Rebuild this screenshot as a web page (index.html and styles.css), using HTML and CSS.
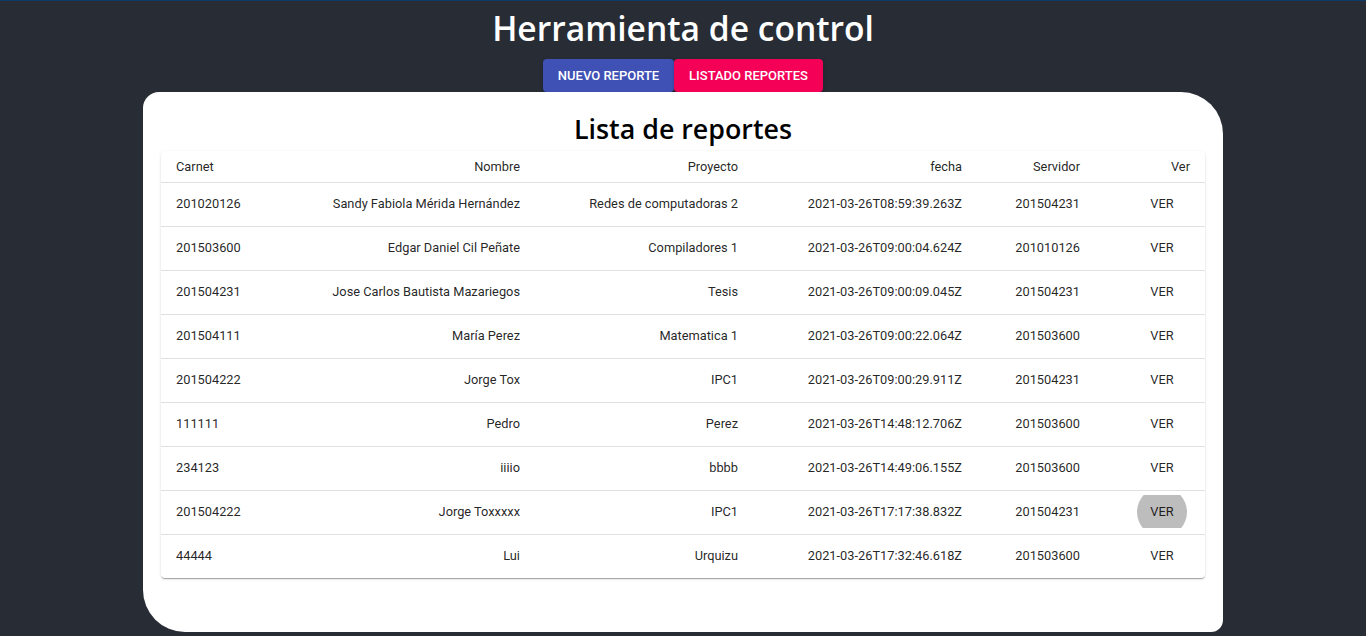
FILE: index.html
```html
<!DOCTYPE html>
<html lang="es">
<head>
<meta charset="utf-8">
<title>Herramienta de control</title>
<link rel="stylesheet" href="styles.css">
</head>
<body>
<div class="app">
  <h1 class="title">Herramienta de control</h1>
  <div class="nav">
    <button class="nav-btn primary">Nuevo reporte</button>
    <button class="nav-btn secondary">Listado reportes</button>
  </div>
  <div class="card">
    <h2 class="subtitle">Lista de reportes</h2>
    <div class="paper">
      <table class="table">
        <colgroup>
          <col class="c-carnet"><col class="c-nombre"><col class="c-proyecto"><col class="c-fecha"><col class="c-servidor"><col class="c-ver">
        </colgroup>
        <thead>
          <tr><th class="left">Carnet</th><th>Nombre</th><th>Proyecto</th><th>fecha</th><th>Servidor</th><th class="last">Ver</th></tr>
        </thead>
        <tbody>
          <tr><td class="left">201020126</td><td>Sandy Fabiola Mérida Hernández</td><td>Redes de computadoras 2</td><td>2021-03-26T08:59:39.263Z</td><td>201504231</td><td class="last"><button class="ver">VER</button></td></tr>
          <tr><td class="left">201503600</td><td>Edgar Daniel Cil Peñate</td><td>Compiladores 1</td><td>2021-03-26T09:00:04.624Z</td><td>201010126</td><td class="last"><button class="ver">VER</button></td></tr>
          <tr><td class="left">201504231</td><td>Jose Carlos Bautista Mazariegos</td><td>Tesis</td><td>2021-03-26T09:00:09.045Z</td><td>201504231</td><td class="last"><button class="ver">VER</button></td></tr>
          <tr><td class="left">201504111</td><td>María Perez</td><td>Matematica 1</td><td>2021-03-26T09:00:22.064Z</td><td>201503600</td><td class="last"><button class="ver">VER</button></td></tr>
          <tr><td class="left">201504222</td><td>Jorge Tox</td><td>IPC1</td><td>2021-03-26T09:00:29.911Z</td><td>201504231</td><td class="last"><button class="ver">VER</button></td></tr>
          <tr><td class="left">111111</td><td>Pedro</td><td>Perez</td><td>2021-03-26T14:48:12.706Z</td><td>201503600</td><td class="last"><button class="ver">VER</button></td></tr>
          <tr><td class="left">234123</td><td>iiiio</td><td>bbbb</td><td>2021-03-26T14:49:06.155Z</td><td>201503600</td><td class="last"><button class="ver">VER</button></td></tr>
          <tr><td class="left">201504222</td><td>Jorge Toxxxxx</td><td>IPC1</td><td>2021-03-26T17:17:38.832Z</td><td>201504231</td><td class="last"><button class="ver active">VER</button></td></tr>
          <tr><td class="left">44444</td><td>Lui</td><td>Urquizu</td><td>2021-03-26T17:32:46.618Z</td><td>201503600</td><td class="last"><button class="ver">VER</button></td></tr>
        </tbody>
      </table>
    </div>
  </div>
</div>
</body>
</html>
```
FILE: styles.css
```css
html, body {
  margin: 0;
  padding: 0;
  height: 100%;
}
body {
  background: #282c34;
  border-top: 1px solid #0e3a6b;
  box-sizing: border-box;
  overflow: hidden;
  font-family: Roboto, "Liberation Sans", sans-serif;
}
.app {
  display: flex;
  flex-direction: column;
  align-items: center;
}
.title {
  margin: 6px 0 0;
  height: 52px;
  font-family: "Open Sans", "Noto Sans", sans-serif;
  font-weight: 600;
  font-size: 33.6px;
  line-height: 42px;
  color: #ffffff;
  letter-spacing: 0;
}
.nav {
  display: flex;
  height: 33px;
}
.nav-btn {
  border: none;
  border-radius: 4px;
  font-family: Roboto, "Liberation Sans", sans-serif;
  font-weight: 500;
  font-size: 13px;
  text-transform: uppercase;
  color: #ffffff;
  padding: 0;
  height: 33px;
  box-shadow: 0 3px 1px -2px rgba(0,0,0,0.2), 0 2px 2px 0 rgba(0,0,0,0.14), 0 1px 5px 0 rgba(0,0,0,0.12);
}
.nav-btn.primary {
  background: #3f51b5;
  width: 131px;
}
.nav-btn.secondary {
  background: #f50057;
  width: 149px;
}
.card {
  width: 1080px;
  height: 540px;
  box-sizing: border-box;
  background: #ffffff;
  border-radius: 16px 42px 12px 42px;
  padding: 18px 18px 0;
}
.subtitle {
  margin: 0;
  height: 41px;
  text-align: center;
  font-family: "Open Sans", "Noto Sans", sans-serif;
  font-weight: 600;
  font-size: 26.8px;
  line-height: 37px;
  color: #000000;
}
.paper {
  background: #fff;
  border-radius: 4px;
  box-shadow: 0 2px 1px -1px rgba(0,0,0,0.2), 0 1px 1px 0 rgba(0,0,0,0.14), 0 1px 3px 0 rgba(0,0,0,0.12);
  overflow: hidden;
}
.table {
  width: 100%;
  border-collapse: collapse;
  table-layout: fixed;
  font-size: 12.8px;
  color: rgba(0,0,0,0.87);
}
.c-carnet { width: 140px; }
.c-nombre { width: 243px; }
.c-proyecto { width: 218px; }
.c-fecha { width: 224px; }
.c-servidor { width: 118px; }
.c-ver { width: 101px; }
th, td {
  text-align: right;
  padding: 0 24px 0 16px;
  border-bottom: 1px solid #e0e0e0;
  white-space: nowrap;
  font-weight: 400;
}
th {
  height: 31px;
  line-height: 18px;
}
td {
  height: 41px;
  padding-bottom: 2px;
}
tbody tr:last-child td {
  border-bottom: none;
}
.left { text-align: left; padding-left: 15px; }
.last { padding-right: 15px; }
.ver {
  position: relative;
  overflow: hidden;
  border: none;
  background: transparent;
  font-family: Roboto, "Liberation Sans", sans-serif;
  font-size: 12.8px;
  color: rgba(0,0,0,0.87);
  width: 50px;
  height: 33px;
  padding: 0;
  margin-right: 3px;
  border-radius: 4px;
  vertical-align: middle;
}
.ver.active {
  border-radius: 0;
  z-index: 0;
}
.ver.active::before {
  content: "";
  position: absolute;
  left: 0;
  top: -8px;
  width: 50px;
  height: 50px;
  border-radius: 50%;
  background: #bdbdbd;
  z-index: -1;
}
```
